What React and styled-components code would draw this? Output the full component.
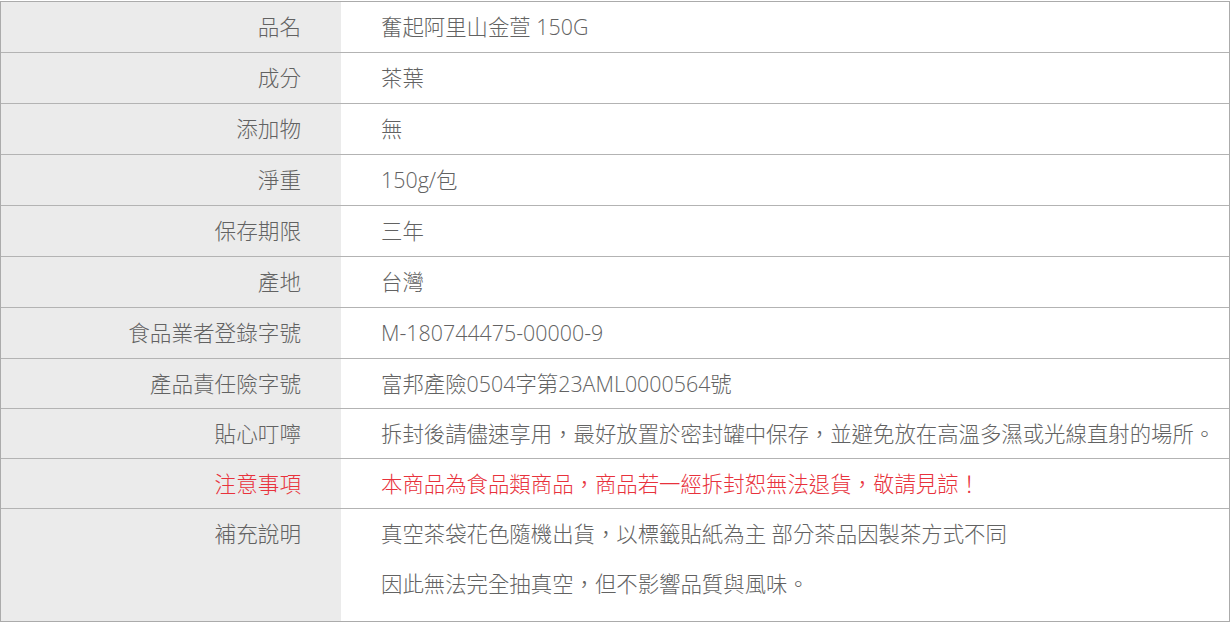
import React from "react";
import styled, { createGlobalStyle } from "styled-components";

const GlobalStyle = createGlobalStyle`
  html, body {
    margin: 0;
    padding: 0;
    background: #fff;
  }
  body {
    padding-top: 1px;
    font-family: "Open Sans", "Noto Sans CJK TC", sans-serif;
  }
`;

const rows = [
  { label: "品名", value: ["奮起阿里山金萱 150G"] },
  { label: "成分", value: ["茶葉"] },
  { label: "添加物", value: ["無"] },
  { label: "淨重", value: ["150g/包"] },
  { label: "保存期限", value: ["三年"] },
  { label: "產地", value: ["台灣"] },
  { label: "食品業者登錄字號", value: ["M-180744475-00000-9"] },
  { label: "產品責任險字號", value: ["富邦產險0504字第23AML0000564號"], tight: true },
  {
    label: "貼心叮嚀",
    value: [
      "拆封後請儘速享用，最好放置於密封罐中保存，並避免放在高溫多濕或光線直射的場所。",
    ],
    tight: true,
  },
  {
    label: "注意事項",
    value: ["本商品為食品類商品，商品若一經拆封恕無法退貨，敬請見諒！"],
    alert: true,
    tight: true,
  },
  {
    label: "補充說明",
    value: [
      "真空茶袋花色隨機出貨，以標籤貼紙為主 部分茶品因製茶方式不同",
      "因此無法完全抽真空，但不影響品質與風味。",
    ],
    last: true,
  },
];

function App() {
  return (
    <>
      <GlobalStyle />
      <Table>
        {rows.map((row) => (
          <Row key={row.label} last={row.last} tight={row.tight}>
            <Label alert={row.alert}>{row.label}</Label>
            <Value alert={row.alert} last={row.last}>
              {row.value.map((line) => (
                <Line key={line}>{line}</Line>
              ))}
            </Value>
          </Row>
        ))}
      </Table>
    </>
  );
}

export default App;

const Table = styled.div`
  width: 1230px;
  box-sizing: border-box;
  border: 1px solid #ababab;
  display: flex;
  flex-direction: column;
`;

const Row = styled.div.withConfig({
  shouldForwardProp: (p) => p !== "last" && p !== "tight",
})`
  display: grid;
  grid-template-columns: 340px 1fr;
  line-height: ${(props) => (props.tight ? "49px" : "50px")};
  border-bottom: ${(props) => (props.last ? "none" : "1px solid #b3b3b3")};
`;

const Label = styled.div.withConfig({ shouldForwardProp: (p) => p !== "alert" })`
  background: #ebebeb;
  text-align: right;
  padding-right: 40px;
  font-size: 21.6px;
  font-weight: 300;
  color: ${(props) => (props.alert ? "#e8323c" : "#626262")};
`;

const Value = styled.div.withConfig({
  shouldForwardProp: (p) => p !== "alert" && p !== "last",
})`
  padding-left: 40px;
  padding-bottom: ${(props) => (props.last ? "12px" : "0")};
  font-size: 21.4px;
  font-weight: 300;
  color: ${(props) => (props.alert ? "#e8323c" : "#626262")};
  white-space: nowrap;
  overflow: hidden;
`;

const Line = styled.div`
  line-height: inherit;
`;
